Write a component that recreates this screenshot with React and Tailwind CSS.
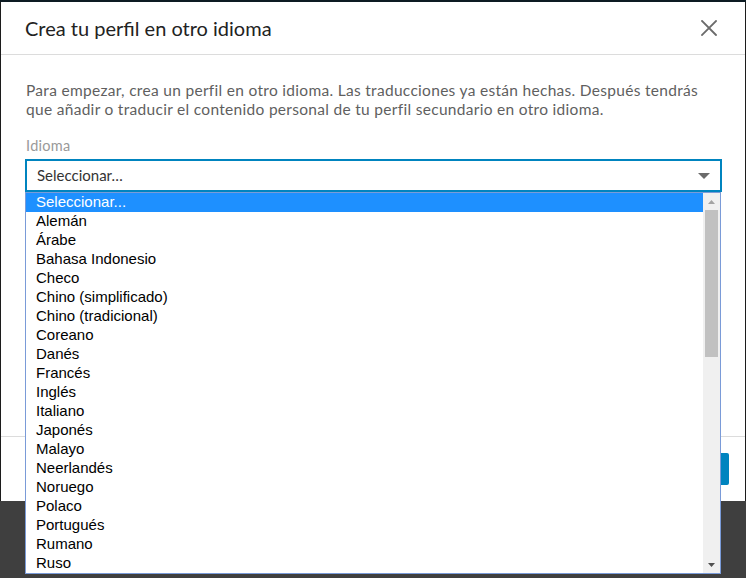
const idiomas = [
  'Seleccionar...',
  'Alemán',
  'Árabe',
  'Bahasa Indonesio',
  'Checo',
  'Chino (simplificado)',
  'Chino (tradicional)',
  'Coreano',
  'Danés',
  'Francés',
  'Inglés',
  'Italiano',
  'Japonés',
  'Malayo',
  'Neerlandés',
  'Noruego',
  'Polaco',
  'Portugués',
  'Rumano',
  'Ruso',
];

const CloseIcon = () => (
  <svg width="16" height="16" viewBox="0 0 16 16" className="text-[#6b6b6b]">
    <path d="M1 1l14 14M15 1L1 15" stroke="currentColor" strokeWidth="1.8" strokeLinecap="square" />
  </svg>
);

const DropdownList = () => (
  <div className="absolute left-[25px] top-[192px] w-[696px] h-[382px] border border-[#7a9bd8] bg-white flex font-['Liberation_Sans',Arial,sans-serif]">
    <ul className="flex-1 min-w-0">
      {idiomas.map((name, i) => (
        <li
          key={name}
          className={`h-[19px] leading-[18px] pl-[10px] text-[15px] ${i === 0 ? 'bg-[#1e90ff] text-white' : 'text-black'}`}
        >
          {name}
        </li>
      ))}
    </ul>
    <div className="w-[17px] bg-[#f0f0f0] flex flex-col">
      <div className="h-[17px] flex items-center justify-center">
        <svg width="7" height="4" viewBox="0 0 7 4">
          <path d="M0 4L3.5 0L7 4z" fill="#a3a3a3" />
        </svg>
      </div>
      <div className="h-[147px] mx-[2px] bg-[#c1c1c1]" />
      <div className="flex-1" />
      <div className="h-[17px] flex items-center justify-center">
        <svg width="7" height="4" viewBox="0 0 7 4">
          <path d="M0 0L7 0L3.5 4z" fill="#505050" />
        </svg>
      </div>
    </div>
  </div>
);

export default function App() {
  return (
    <div className="relative w-[746px] h-[578px] bg-[#3f3f3f] overflow-hidden font-['Lato',sans-serif]">
      <div className="h-[2px] bg-[#0d1b23]" />
      <div className="flex h-[499px]">
        <div className="w-[1px] bg-[#1c1c1c]" />
        <div className="w-[744px] bg-white flex flex-col">
          <div className="h-[53px] flex items-center justify-between pl-[24px] pr-[28px] border-b border-[#dcdcdc] shrink-0">
            <h1 className="text-[20px] text-[#222]">Crea tu perfil en otro idioma</h1>
            <CloseIcon />
          </div>
          <div className="pt-[26px] px-[24px] flex flex-col">
            <p className="pl-[1px] text-[15.5px] tracking-[0.3px] leading-[19px] text-[#5f5f5f]">
              Para empezar, crea un perfil en otro idioma. Las traducciones ya están hechas. Después tendrás que añadir o traducir el contenido personal de tu perfil secundario en otro idioma.
            </p>
            <label className="mt-[18px] pl-[1px] text-[14.5px] tracking-[0.3px] leading-[18px] text-[#999]">Idioma</label>
            <div className="mt-[4px] w-[697px] h-[33px] border-2 border-[#0084bf] flex items-center justify-between pl-[10px] pr-[10px]">
              <span className="text-[15px] text-[#333]">Seleccionar…</span>
              <svg width="12" height="6" viewBox="0 0 12 6">
                <path d="M0 0h12L6 6z" fill="#6b6b6b" />
              </svg>
            </div>
          </div>
          <div className="flex-1" />
          <div className="h-[65px] border-t border-[#dcdcdc] flex items-center justify-end pr-[16px] shrink-0">
            <button className="h-[32px] w-[90px] rounded-[2px] bg-[#0084bf] text-white text-[15px]">Crear perfil</button>
          </div>
        </div>
        <div className="flex-1 bg-[#1c1c1c]" />
      </div>
      <DropdownList />
    </div>
  );
}
